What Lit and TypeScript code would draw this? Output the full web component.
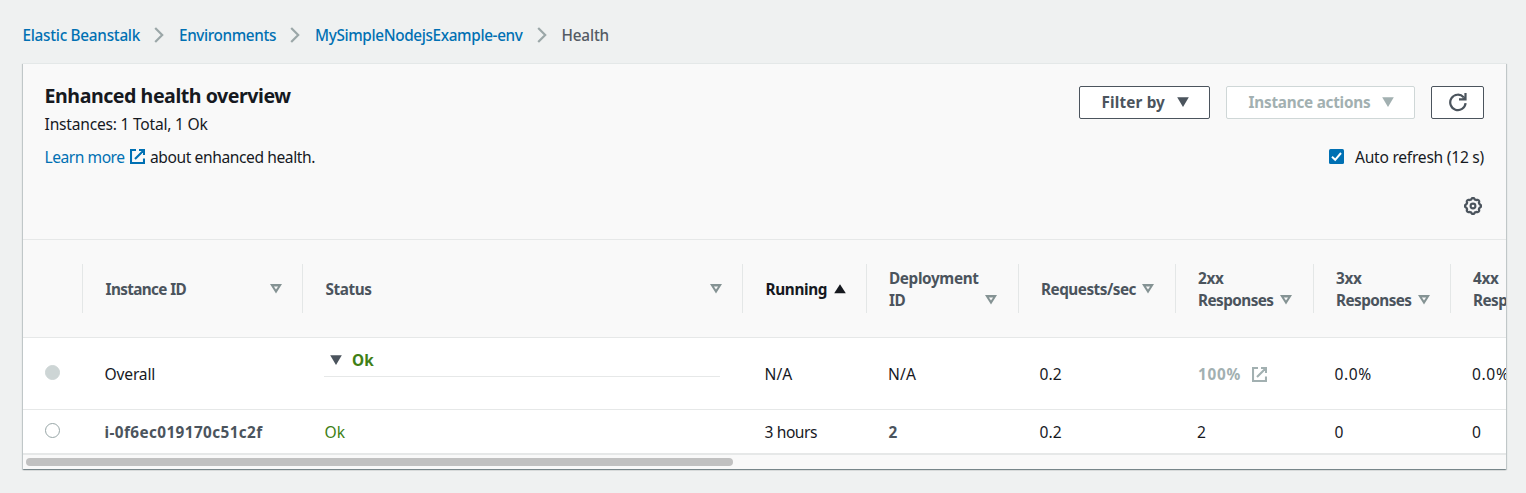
import { LitElement, html, css, svg, nothing } from "lit";
import { customElement, property } from "lit/decorators.js";
import { classMap } from "lit/directives/class-map.js";

/** Single-line label whose tracking is adjusted so that it fills a given width. */
@customElement("fit-text")
class FitText extends LitElement {
  @property({ type: Number }) w = 0;
  @property() text = "";
  static styles = css`
    :host { display: inline-block; white-space: pre; flex: none; }
  `;
  render() {
    return html`<span>${this.text}</span>`;
  }
  updated() {
    const span = this.renderRoot.querySelector("span") as HTMLElement;
    span.style.letterSpacing = "0px";
    const natural = span.getBoundingClientRect().width;
    span.style.letterSpacing = `${(this.w - natural) / this.text.length}px`;
  }
}

const t = (text: string, w: number) => html`<fit-text .text=${text} .w=${w}></fit-text>`;

const chevron = html`<svg class="chev" width="10" height="16" viewBox="0 0 10 16">
  <path d="M1.2 1L8.2 8L1.2 15" fill="none" stroke="#9ba7a8" stroke-width="2.2" /></svg>`;

const external = (cls: string) => html`<svg class=${cls} width="15" height="15" viewBox="0 0 15 15">
  <path d="M6 1H1V14H14V9.5M9 1H14V6M13.6 1.4L5 10" fill="none" stroke="currentColor" stroke-width="2.1" /></svg>`;

const solid = (up = false) => html`<svg class="tri" width="12" height="10" viewBox="0 0 12 10">
  ${up ? svg`<path d="M6 0.2L11.8 9.3H0.2Z" fill="currentColor" />` : svg`<path d="M0.2 0.3H11.8L6 10Z" fill="currentColor" />`}</svg>`;

const hollow = html`<svg class="tri" width="12" height="10" viewBox="0 0 12 10">
  <path d="M0 0.1H12L6 9.5Z M3.9 2.4H8.1L6 5.6Z" fill="#859394" fill-rule="evenodd" /></svg>`;

const gearPath = (() => {
  const pts: string[] = [];
  for (let i = 0; i < 96; i++) {
    const a = (i / 96) * Math.PI * 2;
    const c = Math.cos(a * 8);
    const r = 7.3 + 0.6 * Math.tanh(c * 2);
    pts.push(`${(9 + r * Math.cos(a)).toFixed(2)} ${(9 + r * Math.sin(a)).toFixed(2)}`);
  }
  return `M${pts.join("L")}Z`;
})();

interface Column {
  lines: [string, number][];
  sort?: "asc";
}

const columns: Column[] = [
  { lines: [["Instance ID", 80.5]] },
  { lines: [["Status", 46]] },
  { lines: [["Running", 61.5]], sort: "asc" },
  { lines: [["Deployment", 89.5], ["ID", 16.5]] },
  { lines: [["Requests/sec", 95]] },
  { lines: [["2xx", 25.5], ["Responses", 75.5]] },
  { lines: [["3xx", 25.5], ["Responses", 75.5]] },
  { lines: [["4xx", 25.5], ["Responses", 75.5]] },
];

@customElement("app-root")
class AppRoot extends LitElement {
  static styles = css`
    :host {
      display: block; box-sizing: border-box; width: 1526px; height: 493px; overflow: hidden;
      background: #eff1f1; color: #16191f;
      font: 15.6px/22px "Noto Sans", "Open Sans", sans-serif;
    }
    * { box-sizing: border-box; }
    svg { display: block; flex: none; }
    .crumbs { display: flex; height: 63px; padding: 24px 0 0 22.5px; font-size: 15.3px; font-weight: 500; color: #0070b3; }
    .crumbs .chev { margin: 3px 15px 0 14px; }
    .crumbs .here { color: #545b64; }
    .card {
      margin: 0 20px 0 23px; height: 406px; background: #f9f9f9; border-top: 1px solid #e4e8e8;
      box-shadow: 0 1px 1px 0 rgba(0,28,36,.3), 1px 1px 1px 0 rgba(0,28,36,.15), -1px 1px 1px 0 rgba(0,28,36,.15);
    }
    .head { display: flex; justify-content: space-between; height: 176px; padding: 21px 22px 0 21.6px; border-bottom: 1px solid #e6e8e8; }
    .title { margin: 0; font-size: 19.6px; font-weight: 700; line-height: 22px; height: 28px; }
    .sub { height: 33px; }
    .learn { display: flex; }
    .link { color: #0070b3; }
    .learn .ext { margin: 3px 5px 0 5.4px; color: #0070b3; }
    .tools { display: flex; flex-direction: column; align-items: flex-end; }
    .buttons { display: flex; gap: 16px; padding-top: 1px; }
    .btn {
      display: flex; align-items: center; height: 33px; margin: 0; padding: 0 21.6px 1px; gap: 12px;
      font: inherit; font-size: 15.3px; font-weight: 700; color: #4b545d; background: #fff;
      border: 1px solid #4b545d; border-radius: 2px;
    }
    .btn.filter { width: 131px; }
    .btn.actions { width: 189px; color: #a2b0b1; border-color: #cfd7d7; }
    .btn.icon { width: 53px; padding: 0 0 1px; justify-content: center; }
    .auto { display: flex; gap: 11px; margin-top: 27px; }
    .auto svg { margin-top: 3px; }
    .gear { margin: 29px 2px 0 0; }
    .scroller { height: 215px; overflow: hidden; background: #fff; border-bottom: 2px solid #e6e8e8; }
    .row { display: grid; width: 1600px; grid-template-columns: 60px 220px 440px 124px 152px 157px 138px 137px 172px; }
    .thead { height: 98px; padding: 24px 0; background: #f9f9f9; border-bottom: 1px solid #e6e8e8; font-size: 15.3px; font-weight: 700; color: #4b545d; }
    .th { display: flex; align-items: center; height: 49px; padding-left: 22px; border-right: 1px solid #e4e7e7; }
    .th:nth-child(2), .th:nth-child(3), .th:nth-child(4) { padding-left: 22.6px; }
    .blank { border-right: 1px solid #e4e7e7; }
    .th .lines { display: flex; flex-direction: column; }
    .th .tri { margin-left: auto; margin-right: 20px; }
    .th.two .tri { align-self: flex-end; margin-bottom: 8px; margin-right: 20.5px; }
    .th:nth-child(5) .tri.tri, .th:nth-child(7) .tri.tri, .th:nth-child(6) .tri { margin-right: 21px; }
    .asc { color: #16191f; }
    .overall { height: 72px; border-bottom: 1px solid #e6e8e8; }
    .overall .td { padding-top: 25px; }
    .inst .td { padding-top: 11px; }
    .td { display: flex; padding-left: 21px; }
    .td.lead { padding-left: 21.6px; }
    .td.tight { padding-left: 20.4px; }
    .bold { font-size: 15.3px; font-weight: 700; color: #4b545d; }
    .dot { width: 15px; height: 15px; margin: 2px 0 0 1px; border-radius: 50%; border: 1px solid #98a6a7; background: #fff; }
    .dot.off { background: #cdd5d5; border-color: #cdd5d5; }
    .green { color: #407f16; }
    .overall .status { padding: 11px 0 0 21px; }
    .summary { display: flex; width: 396px; height: 28px; padding-left: 6px; gap: 10px; border-bottom: 1px solid #e6e8e8; color: #4b545d; font-size: 15.3px; font-weight: 700; }
    .summary .tri { margin-top: 6px; }
    .muted { color: #a2b0b1; font-size: 15.3px; font-weight: 700; }
    .muted .ext { margin: 4px 0 0 11px; }
    .overall .muted { padding-left: 22px; }
    .track { height: 14px; padding: 3px 0 0 3px; }
    .thumb { width: 707px; height: 8px; border-radius: 4px; background: #c1c1c1; }
  `;

  private header(c: Column) {
    return html`<div class=${classMap({ th: true, two: c.lines.length > 1, asc: c.sort === "asc" })}>
      <div class="lines">${c.lines.map(([s, w]) => t(s, w))}</div>
      ${c.sort ? solid(true) : hollow}
    </div>`;
  }

  private cell(text: string, w: number, cls = "") {
    return html`<div class="td ${cls}">${text ? t(text, w) : nothing}</div>`;
  }

  render() {
    return html`
      <nav class="crumbs">
        ${t("Elastic Beanstalk", 117.5)}${chevron}${t("Environments", 97)}${chevron}${t("MySimpleNodejsExample-env", 207.5)}${chevron}
        <span class="here">${t("Health", 47.5)}</span>
      </nav>
      <section class="card">
        <header class="head">
          <div>
            <h1 class="title">${t("Enhanced health overview", 246)}</h1>
            <div class="sub">${t("Instances: 1 Total, 1 Ok", 163)}</div>
            <div class="learn"><span class="link">${t("Learn more", 80)}</span>${external("ext")}${t("about enhanced health.", 165)}</div>
          </div>
          <div class="tools">
            <div class="buttons">
              <button class="btn filter">${t("Filter by", 63.4)}${solid()}</button>
              <button class="btn actions">${t("Instance actions", 121.8)}${solid()}</button>
              <button class="btn icon">
                <svg width="20" height="20" viewBox="0 0 20 20"><path d="M17.6 11.2A7.7 7.7 0 1 1 15.6 5.2" fill="none" stroke="#4b545d" stroke-width="2.2" /><path d="M18.6 1V8.6H11V6.2H14.4L16.4 4.4V1Z" fill="#4b545d" /></svg>
              </button>
            </div>
            <div class="auto">
              <svg width="15" height="15" viewBox="0 0 15 15"><rect width="15" height="15" rx="1.5" fill="#0070b3" /><path d="M3 7.8L6.2 10.8L12 4" fill="none" stroke="#fff" stroke-width="2" /></svg>
              ${t("Auto refresh (12 s)", 129)}
            </div>
            <svg class="gear" width="18" height="18" viewBox="0 0 18 18"><path d=${gearPath} fill="none" stroke="#4b545d" stroke-width="2.3" /><circle cx="9" cy="9" r="2.4" fill="none" stroke="#4b545d" stroke-width="2.1" /></svg>
          </div>
        </header>
        <div class="scroller">
          <div class="row thead"><div class="blank"></div>${columns.map((c) => this.header(c))}</div>
          <div class="row overall">
            <div class="td"><span class="dot off"></span></div>
            ${this.cell("Overall", 50.5, "lead")}
            <div class="td status"><div class="summary">${solid()}<span class="green">${t("Ok", 22)}</span></div></div>
            ${this.cell("N/A", 27.5, "lead")}${this.cell("N/A", 28)}${this.cell("0.2", 22.5, "tight")}
            <div class="td muted">${t("100%", 43)}${external("ext")}</div>
            ${this.cell("0.0%", 37.5, "tight")}${this.cell("0.0%", 37.5)}
          </div>
          <div class="row inst">
            <div class="td"><span class="dot"></span></div>
            ${this.cell("i-0f6ec019170c51c2f", 158, "bold lead")}${this.cell("Ok", 20.5, "green lead")}
            ${this.cell("3 hours", 52.5, "lead")}${this.cell("2", 9, "bold lead")}${this.cell("0.2", 22.5, "tight")}
            ${this.cell("2", 9)}${this.cell("0", 9, "tight")}${this.cell("0", 9)}
          </div>
        </div>
        <div class="track"><div class="thumb"></div></div>
      </section>`;
  }
}
